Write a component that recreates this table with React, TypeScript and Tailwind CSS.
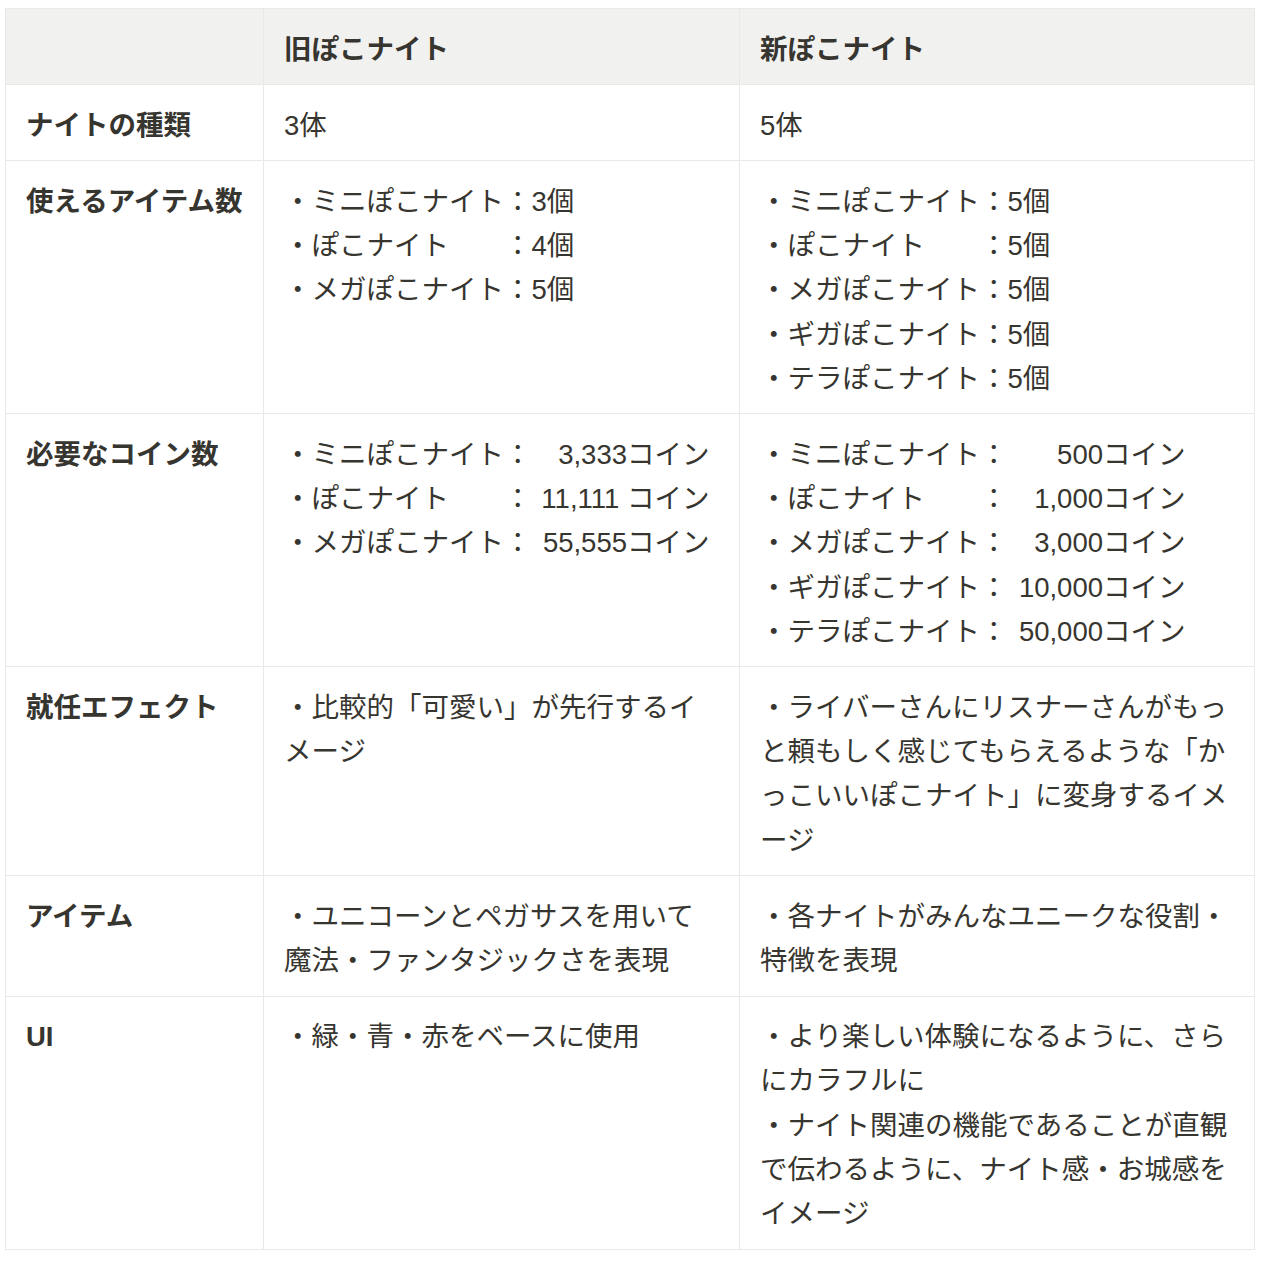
import React from 'react'

const cell = 'border border-[#e9e9e7] align-top px-5 pt-[18.5px] pb-[12.5px]'
const head = 'font-bold'

function CountList({ rows }: { rows: [string, string][] }) {
  return (
    <div>
      {rows.map(([label, value]) => (
        <div key={label} className="flex whitespace-nowrap">
          <span className="w-[1em] shrink-0">・</span>
          <span className="w-[7em] shrink-0">{label}</span>
          <span className="w-[1em] shrink-0">：</span>
          <span>{value}</span>
        </div>
      ))}
    </div>
  )
}

function CoinList({ rows }: { rows: [string, string][] }) {
  return (
    <div>
      {rows.map(([label, value]) => (
        <div key={label} className="flex whitespace-nowrap">
          <span className="w-[1em] shrink-0">・</span>
          <span className="w-[7em] shrink-0">{label}</span>
          <span className="w-[1em] shrink-0">：</span>
          <span className="w-[178px] shrink-0 text-right">{value}</span>
        </div>
      ))}
    </div>
  )
}

export default function App() {
  return (
    <div
      className="min-h-screen bg-white pl-[5px] pt-2 text-[#37352f]"
      style={{ fontFamily: '"Liberation Sans", "Noto Sans CJK JP", sans-serif' }}
    >
      <table className="table-fixed border-collapse w-[1249px] text-[27.5px] leading-[44.2px]">
        <colgroup>
          <col className="w-[258px]" />
          <col className="w-[476px]" />
          <col className="w-[515px]" />
        </colgroup>
        <thead>
          <tr className="bg-[#f1f1ef]">
            <th className={`${cell} ${head} text-left`}></th>
            <th className={`${cell} ${head} text-left`}>旧ぽこナイト</th>
            <th className={`${cell} ${head} text-left`}>新ぽこナイト</th>
          </tr>
        </thead>
        <tbody>
          <tr>
            <td className={`${cell} ${head}`}>ナイトの種類</td>
            <td className={cell}>3体</td>
            <td className={cell}>5体</td>
          </tr>
          <tr>
            <td className={`${cell} ${head}`}>使えるアイテム数</td>
            <td className={cell}>
              <CountList
                rows={[
                  ['ミニぽこナイト', '3個'],
                  ['ぽこナイト', '4個'],
                  ['メガぽこナイト', '5個'],
                ]}
              />
            </td>
            <td className={cell}>
              <CountList
                rows={[
                  ['ミニぽこナイト', '5個'],
                  ['ぽこナイト', '5個'],
                  ['メガぽこナイト', '5個'],
                  ['ギガぽこナイト', '5個'],
                  ['テラぽこナイト', '5個'],
                ]}
              />
            </td>
          </tr>
          <tr>
            <td className={`${cell} ${head}`}>必要なコイン数</td>
            <td className={cell}>
              <CoinList
                rows={[
                  ['ミニぽこナイト', '3,333コイン'],
                  ['ぽこナイト', '11,111 コイン'],
                  ['メガぽこナイト', '55,555コイン'],
                ]}
              />
            </td>
            <td className={cell}>
              <CoinList
                rows={[
                  ['ミニぽこナイト', '500コイン'],
                  ['ぽこナイト', '1,000コイン'],
                  ['メガぽこナイト', '3,000コイン'],
                  ['ギガぽこナイト', '10,000コイン'],
                  ['テラぽこナイト', '50,000コイン'],
                ]}
              />
            </td>
          </tr>
          <tr>
            <td className={`${cell} ${head}`}>就任エフェクト</td>
            <td className={cell}>
              ・比較的「可愛い」が先行するイ<br />メージ
            </td>
            <td className={cell}>
              ・ライバーさんにリスナーさんがもっ<br />と頼もしく感じてもらえるような「か<br />っこいいぽこナイト」に変身するイメ<br />ージ
            </td>
          </tr>
          <tr>
            <td className={`${cell} ${head}`}>アイテム</td>
            <td className={cell}>
              ・ユニコーンとペガサスを用いて<br />魔法・ファンタジックさを表現
            </td>
            <td className={cell}>
              ・各ナイトがみんなユニークな役割・<br />特徴を表現
            </td>
          </tr>
          <tr>
            <td className={`${cell} ${head}`}>UI</td>
            <td className={cell}>・緑・青・赤をベースに使用</td>
            <td className={cell}>
              ・より楽しい体験になるように、さら<br />にカラフルに<br />・ナイト関連の機能であることが直観<br />で伝わるように、ナイト感・お城感を<br />イメージ
            </td>
          </tr>
        </tbody>
      </table>
    </div>
  )
}
